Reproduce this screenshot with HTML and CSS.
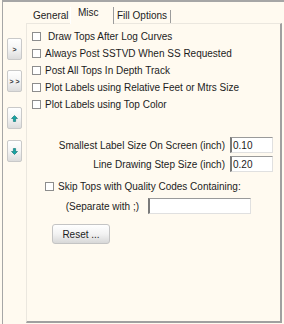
FILE: index.html
```html
<!DOCTYPE html>
<html lang="en">
<head>
    <meta charset="UTF-8">
    <title>Tops Display - Misc</title>
    <link rel="stylesheet" href="styles.css">
</head>
<body>
    <div class="frame">
        <div class="side">
            <button class="nav nav-1">&gt;</button>
            <button class="nav nav-2">&gt; &gt;</button>
            <button class="nav nav-3">
                <svg width="7" height="7" viewBox="0 0 7 7"><path d="M3.5 0.5 L6.5 3.5 L4.6 3.5 L4.6 6.5 L2.4 6.5 L2.4 3.5 L0.5 3.5 Z" fill="#14a5a5" stroke="#0b6f6f" stroke-width="0.6"/></svg>
            </button>
            <button class="nav nav-4">
                <svg width="7" height="7" viewBox="0 0 7 7"><path d="M3.5 6.5 L6.5 3.5 L4.6 3.5 L4.6 0.5 L2.4 0.5 L2.4 3.5 L0.5 3.5 Z" fill="#14a5a5" stroke="#0b6f6f" stroke-width="0.6"/></svg>
            </button>
        </div>

        <div class="main">
            <div class="tabs">
                <div class="tab tab-general">General</div>
                <div class="tab tab-misc active">Misc</div>
                <div class="tab tab-fill">Fill Options</div>
            </div>

            <div class="panel">
                <div class="checks">
                    <label class="check"><input type="checkbox"><span class="spaced">Draw Tops After Log Curves</span></label>
                    <label class="check"><input type="checkbox"><span>Always Post SSTVD When SS Requested</span></label>
                    <label class="check"><input type="checkbox"><span>Post All Tops In Depth Track</span></label>
                    <label class="check"><input type="checkbox"><span>Plot Labels using Relative Feet or Mtrs Size</span></label>
                    <label class="check"><input type="checkbox"><span>Plot Labels using Top Color</span></label>
                </div>

                <div class="fields">
                    <div class="field">
                        <span class="field-label">Smallest Label Size On Screen (inch)</span>
                        <input class="text small" type="text" value="0.10">
                    </div>
                    <div class="field">
                        <span class="field-label">Line Drawing Step Size (inch)</span>
                        <input class="text small" type="text" value="0.20">
                    </div>
                </div>

                <label class="check skip"><input type="checkbox"><span>Skip Tops with Quality Codes Containing:</span></label>

                <div class="field separate">
                    <span class="field-label sep-label">(Separate with ;)</span>
                    <input class="text wide" type="text" value="">
                </div>

                <button class="reset">Reset ...</button>
            </div>
        </div>
    </div>
</body>
</html>
```

FILE: styles.css
```css
body {
    margin: 0;
    background: #fffaf0;
    font-family: 'Liberation Sans', Arial, sans-serif;
    font-size: 10px;
    color: #1c1c1c;
}
.frame {
    display: flex;
    margin-left: 2px;
    height: 322px;
    border-left: 1px solid #a6a6a6;
    border-top: 2px solid #a6a6a6;
}

/* left arrow buttons */
.side {
    width: 23px;
    padding-left: 4px;
    display: flex;
    flex-direction: column;
    align-items: flex-start;
    box-sizing: border-box;
}
.nav {
    width: 15px;
    height: 22px;
    padding: 0;
    border: 1px solid #c9c9c9;
    border-radius: 2px;
    background: linear-gradient(#ffffff, #f4f4f4 50%, #dcdcdc);
    font-family: 'Liberation Sans', Arial, sans-serif;
    font-size: 7px;
    font-weight: bold;
    color: #333;
    display: flex;
    align-items: center;
    justify-content: center;
    white-space: nowrap;
}
.nav-1 { margin-top: 36px; }
.nav-2 { margin-top: 10px; }
.nav-3 { margin-top: 15px; }
.nav-4 { margin-top: 11px; }

/* tabs + page */
.main {
    flex: 1;
    display: flex;
    flex-direction: column;
}
.tabs {
    height: 21px;
    display: flex;
    align-items: flex-end;
    padding-left: 3px;
}
.tab {
    height: 13px;
    line-height: 11px;
    padding-left: 4px;
    box-sizing: border-box;
    border-right: 1px solid #9c9c9c;
}
.tab-general { width: 41px; border-right: none; }
.tab-misc { width: 44px; }
.tab-fill { width: 57px; padding-left: 3px; }
.tab.active {
    height: 17px;
    line-height: 12px;
    padding-left: 7px;
    margin-bottom: -1px;
    background: #fffaf0;
    border-left: 1px solid #ffffff;
    position: relative;
    z-index: 1;
}
.panel {
    height: 300px;
    margin-right: 2px;
    box-sizing: border-box;
    border-top: 1px solid #ebe7df;
    border-left: 1px solid #ebe7df;
    border-right: 2px solid #a0a0a0;
    border-bottom: 2px solid #a0a0a0;
    padding: 4px 0 0 5px;
}

/* checkbox rows */
.check {
    display: flex;
    align-items: center;
    height: 17px;
}
.check input {
    appearance: none;
    width: 9px;
    height: 9px;
    margin: 0 4px 0 0;
    border: 1px solid #8d8d8d;
    background: #fff;
}
.spaced {
    padding-left: 3px;
}
.skip {
    margin: 6px 0 0 13px;
}

/* number fields */
.fields {
    margin-top: 24px;
    display: flex;
    flex-direction: column;
    gap: 3px;
}
.field {
    display: flex;
    align-items: center;
    height: 16px;
}
.field-label {
    width: 193px;
    text-align: right;
    margin-right: 5px;
}
.text {
    height: 16px;
    box-sizing: border-box;
    padding: 0 0 0 1px;
    border-style: solid;
    border-width: 1px 1px 1px 2px;
    border-color: #9a9a9a #e0e0e0 #e0e0e0 #7a7a7a;
    background: #fff;
    font-family: 'Liberation Sans', Arial, sans-serif;
    font-size: 10px;
    color: #1c1c1c;
    outline: none;
}
.small { width: 43px; }
.separate { margin-top: 3px; }
.sep-label {
    width: 107px;
    margin-right: 9px;
}
.wide { width: 103px; }

.reset {
    margin: 10px 0 0 20px;
    width: 58px;
    height: 20px;
    padding: 0;
    border: 1px solid #c4c4c4;
    border-radius: 3px;
    background: linear-gradient(#ffffff, #f2f2f2 50%, #d8d8d8);
    font-family: 'Liberation Sans', Arial, sans-serif;
    font-size: 10px;
    color: #1c1c1c;
}
```
